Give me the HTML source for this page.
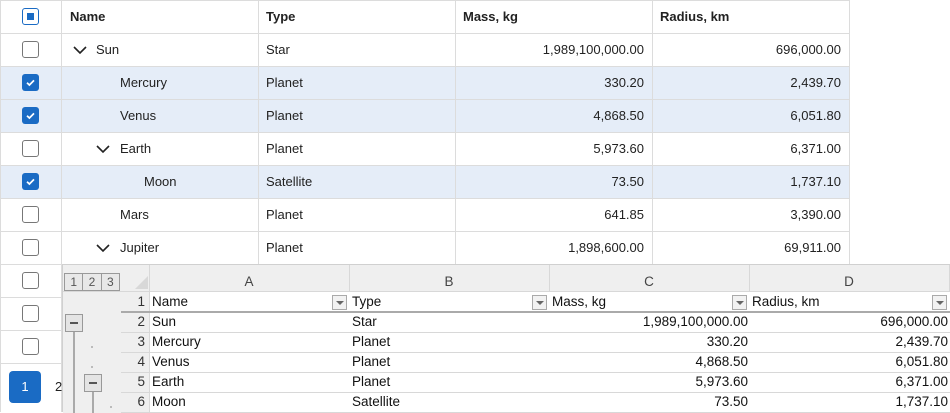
<!DOCTYPE html>
<html><head><style>
*{box-sizing:border-box;margin:0;padding:0}
body{width:950px;height:412px;overflow:hidden;background:#fff;font-family:"Liberation Sans",sans-serif;font-size:13px;color:#222;position:relative}
.a{position:absolute}
.hl{position:absolute;left:0;width:850px;height:1px;background:#dcdcdc}
.vl{position:absolute;top:0;width:1px;background:#dcdcdc}
.cb{position:absolute;left:22px;width:17px;height:17px;border:1.5px solid #777;border-radius:3px;background:#fff}
.cbc{border:none;background:#1a6bc4}
.t{position:absolute;line-height:33px;white-space:nowrap}
.r{text-align:right}
.chev{position:absolute;width:16px;height:16px}
.sel{position:absolute;left:0;width:849px;height:33px;background:#e5edf8}
.ss{position:absolute;left:62px;top:264px;width:888px;height:148px;background:#fff;border-top:1px solid #d0d0d0;border-left:1px solid #d0d0d0;font-size:13.5px;color:#111}
.g{position:absolute;background:#d8d8d8}
.st{position:absolute;line-height:20px;white-space:nowrap}
.dd{position:absolute;width:15px;height:15px;border:1px solid #aaa;background:#f2f2f2}
.dd:after{content:"";position:absolute;left:3px;top:5px;border-left:4px solid transparent;border-right:4px solid transparent;border-top:4px solid #666}
</style></head><body>
<!-- top grid -->
<div class="sel" style="top:66px"></div>
<div class="sel" style="top:99px"></div>
<div class="sel" style="top:165px"></div>
<div class="a" style="left:0;top:0;width:850px;height:412px;border-right:1px solid #dcdcdc;border-left:1px solid #dcdcdc;border-top:1px solid #dcdcdc"></div>
<div class="hl" style="top:33px"></div><div class="hl" style="top:66px"></div><div class="hl" style="top:99px"></div><div class="hl" style="top:132px"></div><div class="hl" style="top:165px"></div><div class="hl" style="top:198px"></div><div class="hl" style="top:231px"></div><div class="hl" style="top:264px"></div><div class="hl" style="top:297px;width:62px"></div><div class="hl" style="top:330px;width:62px"></div><div class="hl" style="top:363px;width:62px"></div>
<div class="vl" style="left:61px;height:412px"></div>
<div class="vl" style="left:258px;height:264px"></div>
<div class="vl" style="left:455px;height:264px"></div>
<div class="vl" style="left:652px;height:264px"></div>
<div class="cb" style="top:8px;border-color:#1a6bc4"><div class="a" style="left:3.5px;top:3.5px;width:7px;height:7px;background:#1a6bc4"></div></div>
<div class="t" style="left:70px;top:0;font-weight:bold">Name</div>
<div class="t" style="left:266px;top:0;font-weight:bold">Type</div>
<div class="t" style="left:463px;top:0;font-weight:bold">Mass, kg</div>
<div class="t" style="left:660px;top:0;font-weight:bold">Radius, km</div>
<svg width="0" height="0" style="position:absolute"><defs><symbol id="ck" viewBox="0 0 17 17"><rect width="17" height="17" rx="3" fill="#1a6bc4"/><path d="M5 8.7l2.4 2.3 4.6-4.6" stroke="#fff" stroke-width="1.7" fill="none"/></symbol><symbol id="cv" viewBox="0 0 16 16"><path d="M2 5l6 6 6-6" stroke="#222" stroke-width="1.6" fill="none"/></symbol></defs></svg>
<!-- rows -->
<div class="cb" style="top:41px"></div>
<svg class="chev" style="left:72px;top:42px"><use href="#cv"/></svg>
<div class="t" style="left:96px;top:33px">Sun</div><div class="t" style="left:266px;top:33px">Star</div>
<div class="t r" style="right:306px;top:33px">1,989,100,000.00</div><div class="t r" style="right:109px;top:33px">696,000.00</div>
<svg class="a" style="left:22px;top:74px" width="17" height="17"><use href="#ck"/></svg>
<div class="t" style="left:120px;top:66px">Mercury</div><div class="t" style="left:266px;top:66px">Planet</div>
<div class="t r" style="right:306px;top:66px">330.20</div><div class="t r" style="right:109px;top:66px">2,439.70</div>
<svg class="a" style="left:22px;top:107px" width="17" height="17"><use href="#ck"/></svg>
<div class="t" style="left:120px;top:99px">Venus</div><div class="t" style="left:266px;top:99px">Planet</div>
<div class="t r" style="right:306px;top:99px">4,868.50</div><div class="t r" style="right:109px;top:99px">6,051.80</div>
<div class="cb" style="top:140px"></div>
<svg class="chev" style="left:95px;top:141px"><use href="#cv"/></svg>
<div class="t" style="left:120px;top:132px">Earth</div><div class="t" style="left:266px;top:132px">Planet</div>
<div class="t r" style="right:306px;top:132px">5,973.60</div><div class="t r" style="right:109px;top:132px">6,371.00</div>
<svg class="a" style="left:22px;top:173px" width="17" height="17"><use href="#ck"/></svg>
<div class="t" style="left:144px;top:165px">Moon</div><div class="t" style="left:266px;top:165px">Satellite</div>
<div class="t r" style="right:306px;top:165px">73.50</div><div class="t r" style="right:109px;top:165px">1,737.10</div>
<div class="cb" style="top:206px"></div>
<div class="t" style="left:120px;top:198px">Mars</div><div class="t" style="left:266px;top:198px">Planet</div>
<div class="t r" style="right:306px;top:198px">641.85</div><div class="t r" style="right:109px;top:198px">3,390.00</div>
<div class="cb" style="top:239px"></div>
<svg class="chev" style="left:95px;top:240px"><use href="#cv"/></svg>
<div class="t" style="left:120px;top:231px">Jupiter</div><div class="t" style="left:266px;top:231px">Planet</div>
<div class="t r" style="right:306px;top:231px">1,898,600.00</div><div class="t r" style="right:109px;top:231px">69,911.00</div>
<div class="cb" style="top:272px"></div><div class="cb" style="top:305px"></div><div class="cb" style="top:338px"></div>
<div class="a" style="left:9px;top:371px;width:32px;height:32px;background:#1a6bc4;border-radius:4px;color:#fff;text-align:center;line-height:32px">1</div>
<div class="a" style="left:55px;top:371px;line-height:32px">2</div>
<!-- spreadsheet -->
<div class="ss">
 <div class="a" style="left:0;top:0;width:887px;height:27px;background:#efefef"></div>
 <div class="a" style="left:0;top:0;width:87px;height:148px;background:#efefef"></div>
 <div class="a" style="left:1px;top:8px;width:56px;height:18px;border:1px solid #999;display:flex;color:#555;font-size:12px">
  <div style="flex:1;border-right:1px solid #999;text-align:center;line-height:16px;background:#e8e8e8">1</div><div style="flex:1;border-right:1px solid #999;text-align:center;line-height:16px;background:#e8e8e8">2</div><div style="flex:1;text-align:center;line-height:16px;background:#e8e8e8">3</div></div>
 <div class="a" style="left:72px;top:11px;width:0;height:0;border-left:13px solid transparent;border-bottom:13px solid #d8d8d8"></div>
 <div class="g" style="left:86px;top:0;width:1px;height:148px"></div>
 <div class="g" style="left:286px;top:0;width:1px;height:148px"></div>
 <div class="g" style="left:486px;top:0;width:1px;height:148px"></div>
 <div class="g" style="left:686px;top:0;width:1px;height:148px"></div>
 <div class="g" style="left:886px;top:0;width:1px;height:148px"></div>
 <div class="st" style="left:86px;width:200px;top:7px;text-align:center;color:#444">A</div>
 <div class="st" style="left:286px;width:200px;top:7px;text-align:center;color:#444">B</div>
 <div class="st" style="left:486px;width:200px;top:7px;text-align:center;color:#444">C</div>
 <div class="st" style="left:686px;width:200px;top:7px;text-align:center;color:#444">D</div>
 <div class="a" style="left:87px;top:27px;width:800px;height:121px;background:#fff"></div>
 <div class="g" style="left:0;top:26px;width:887px;height:1px"></div>
 <div class="g" style="left:58px;top:46px;width:829px;height:2px;background:#aaa"></div>
 <div class="g" style="left:58px;top:67px;width:829px;height:1px"></div>
 <div class="g" style="left:58px;top:87px;width:829px;height:1px"></div>
 <div class="g" style="left:58px;top:107px;width:829px;height:1px"></div>
 <div class="g" style="left:58px;top:127px;width:829px;height:1px"></div>
 <div class="g" style="left:58px;top:147px;width:829px;height:1px"></div>
 <div class="st r" style="left:58px;width:24px;top:27px;color:#333">1</div>
 <div class="st r" style="left:58px;width:24px;top:47px;color:#333">2</div>
 <div class="st r" style="left:58px;width:24px;top:67px;color:#333">3</div>
 <div class="st r" style="left:58px;width:24px;top:87px;color:#333">4</div>
 <div class="st r" style="left:58px;width:24px;top:107px;color:#333">5</div>
 <div class="st r" style="left:58px;width:24px;top:127px;color:#333">6</div>
 <div class="a" style="left:2px;top:49px;width:18px;height:18px;border:1px solid #999;background:#e4e4e4"><div class="a" style="left:4px;top:7px;width:8px;height:2px;background:#555"></div></div>
 <div class="a" style="left:21px;top:109px;width:18px;height:18px;border:1px solid #999;background:#e4e4e4"><div class="a" style="left:4px;top:7px;width:8px;height:2px;background:#555"></div></div>
 <div class="g" style="left:10px;top:67px;width:2px;height:81px;background:#aaa"></div>
 <div class="g" style="left:29px;top:127px;width:2px;height:21px;background:#aaa"></div>
 <div class="g" style="left:28px;top:81px;width:2px;height:2px;background:#bbb"></div>
 <div class="g" style="left:28px;top:101px;width:2px;height:2px;background:#bbb"></div>
 <div class="g" style="left:47px;top:141px;width:2px;height:2px;background:#bbb"></div>
 <div class="st" style="left:89px;top:27px">Name</div><div class="dd" style="left:269px;top:30px"></div>
 <div class="st" style="left:289px;top:27px">Type</div><div class="dd" style="left:469px;top:30px"></div>
 <div class="st" style="left:489px;top:27px">Mass, kg</div><div class="dd" style="left:669px;top:30px"></div>
 <div class="st" style="left:689px;top:27px">Radius, km</div><div class="dd" style="left:869px;top:30px"></div>
 <div class="st" style="left:89px;top:47px">Sun</div><div class="st" style="left:289px;top:47px">Star</div><div class="st r" style="left:487px;width:198px;top:47px">1,989,100,000.00</div><div class="st r" style="left:687px;width:198px;top:47px">696,000.00</div>
 <div class="st" style="left:89px;top:67px">Mercury</div><div class="st" style="left:289px;top:67px">Planet</div><div class="st r" style="left:487px;width:198px;top:67px">330.20</div><div class="st r" style="left:687px;width:198px;top:67px">2,439.70</div>
 <div class="st" style="left:89px;top:87px">Venus</div><div class="st" style="left:289px;top:87px">Planet</div><div class="st r" style="left:487px;width:198px;top:87px">4,868.50</div><div class="st r" style="left:687px;width:198px;top:87px">6,051.80</div>
 <div class="st" style="left:89px;top:107px">Earth</div><div class="st" style="left:289px;top:107px">Planet</div><div class="st r" style="left:487px;width:198px;top:107px">5,973.60</div><div class="st r" style="left:687px;width:198px;top:107px">6,371.00</div>
 <div class="st" style="left:89px;top:127px">Moon</div><div class="st" style="left:289px;top:127px">Satellite</div><div class="st r" style="left:487px;width:198px;top:127px">73.50</div><div class="st r" style="left:687px;width:198px;top:127px">1,737.10</div>
</div>
</body></html>
